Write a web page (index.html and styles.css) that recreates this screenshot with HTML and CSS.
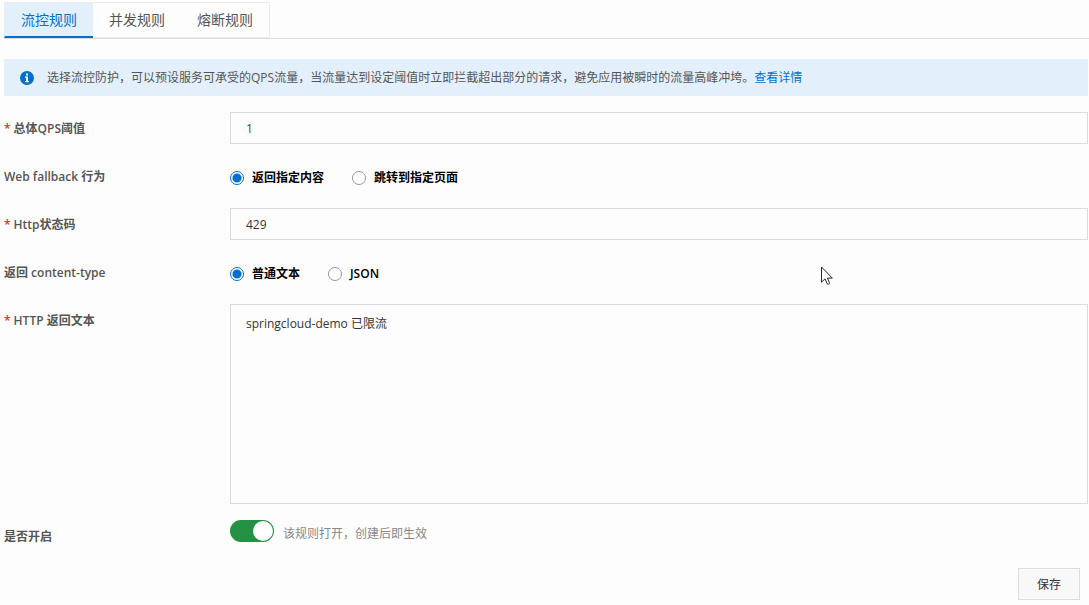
FILE: index.html
```html
<!DOCTYPE html>
<html lang="zh-CN">
<head>
<meta charset="utf-8">
<title>流控规则</title>
<link rel="stylesheet" href="styles.css">
</head>
<body>
<nav class="tabs" role="tablist">
  <button class="tab tab-active" type="button" role="tab" aria-selected="true">流控规则</button>
  <button class="tab" type="button" role="tab" aria-selected="false">并发规则</button>
  <button class="tab" type="button" role="tab" aria-selected="false">熔断规则</button>
</nav>
<main class="panel">
  <div class="notice">
    <svg class="notice-icon" viewBox="0 0 14 14" aria-hidden="true">
      <circle cx="7" cy="7" r="7" fill="#0070cc"/>
      <path d="M6 2.5h2v2H6zM5 5.5h3v4.5h1v1.2H5V10h1V6.7H5z" fill="#fff"/>
    </svg>
    <p class="notice-text">选择流控防护，可以预设服务可承受的QPS流量，当流量达到设定阈值时立即拦截超出部分的请求，避免应用被瞬时的流量高峰冲垮。<a class="link" href="#">查看详情</a></p>
  </div>
  <form class="form">
    <div class="row">
      <label class="label required" for="qps">总体QPS阈值</label>
      <input class="field field-number" id="qps" type="text" value="1">
    </div>
    <div class="row">
      <span class="label" id="fallback-label">Web fallback 行为</span>
      <div class="options" role="radiogroup" aria-labelledby="fallback-label">
        <label class="option"><input class="radio" type="radio" name="fallback" checked>返回指定内容</label>
        <label class="option"><input class="radio" type="radio" name="fallback">跳转到指定页面</label>
      </div>
    </div>
    <div class="row">
      <label class="label required" for="status">Http状态码</label>
      <input class="field" id="status" type="text" value="429">
    </div>
    <div class="row">
      <span class="label" id="type-label">返回 content-type</span>
      <div class="options" role="radiogroup" aria-labelledby="type-label">
        <label class="option"><input class="radio" type="radio" name="type" checked>普通文本</label>
        <label class="option"><input class="radio" type="radio" name="type">JSON</label>
      </div>
    </div>
    <div class="row">
      <label class="label required" for="body">HTTP 返回文本</label>
      <textarea class="field field-area" id="body" spellcheck="false">springcloud-demo 已限流</textarea>
    </div>
    <div class="row">
      <label class="label" for="enabled">是否开启</label>
      <div class="toggle">
        <input class="switch" id="enabled" type="checkbox" role="switch" checked>
        <span class="hint">该规则打开，创建后即生效</span>
      </div>
    </div>
    <div class="actions">
      <button class="save" type="button">保存</button>
    </div>
  </form>
</main>
<svg class="cursor" viewBox="0 0 14 20" aria-hidden="true">
  <path d="M1.5 1v15.2l3.5-3.4 2.2 5.1c.5.9 2.7.1 2.3-1l-2.1-4.8h4.9z" fill="#fff" stroke="#26262e"/>
</svg>
</body>
</html>
```
FILE: styles.css
```css
* {
  box-sizing: border-box;
}

body {
  margin: 0;
  padding-top: 2px;
  background: #fdfdfd;
  color: #555;
  font-family: "Open Sans", "Noto Sans CJK SC", sans-serif;
  font-size: 12px;
  line-height: 18px;
}

button,
input,
textarea {
  margin: 0;
  font: inherit;
}

.tabs {
  display: flex;
  height: 37px;
  margin-left: 4px;
  border-bottom: 1px solid #dcdcdc;
}

.tab {
  width: 88px;
  padding: 0;
  border: solid #ebebeb;
  border-width: 1px 0;
  background: #fdfdfd;
  color: #555;
  font-size: 14px;
  line-height: 20px;
}

.tab:last-child {
  width: 89px;
  border-right-width: 1px;
}

.tab-active {
  width: 89px;
  border-left: 1px solid #ebebeb;
  border-bottom: 2px solid #0070cc;
  background: #e3f0fc;
  color: #0070cc;
}

.panel {
  padding: 20px 1px 0 4px;
}

.notice {
  display: flex;
  align-items: center;
  gap: 13px;
  min-height: 37px;
  padding: 0 16px;
  background: #e3f0fc;
}

.notice-icon {
  flex: none;
  width: 14px;
  height: 14px;
}

.notice-text {
  margin: 0;
}

.link {
  color: #0070cc;
  text-decoration: none;
}

.form {
  display: grid;
  gap: 16px;
  padding-top: 16px;
}

.row {
  display: grid;
  grid-template-columns: 226px 1fr;
  height: auto;
  min-height: 32px;
}

.label {
  height: 32px;
  color: #555;
  font-weight: 600;
  line-height: 34px;
}

.required::before {
  content: "*";
  margin-right: 3px;
  color: #d93026;
}

.field {
  width: 100%;
  height: 32px;
  padding: 0 15px;
  border: 1px solid #dcdcdc;
  border-radius: 0;
  outline: none;
  background: transparent;
  color: #333;
}

.field-number {
  color: #446;
}

.field-area {
  display: block;
  height: 200px;
  padding: 10px 15px;
  resize: none;
}

.options {
  display: flex;
  align-items: center;
  gap: 28px;
  padding-top: 4px;
}

.option {
  display: flex;
  align-items: center;
  gap: 8px;
  color: #000;
  font-weight: 600;
  line-height: 20px;
}

.radio {
  width: 14px;
  height: 14px;
  border: 1px solid #999;
  border-radius: 50%;
  appearance: none;
  background: #fff;
}

.radio:checked {
  border-color: #0070cc;
  background: radial-gradient(circle, #0070cc 4px, #fff 5px);
}

.toggle {
  display: flex;
  align-items: flex-start;
  gap: 9px;
}

.switch {
  display: flex;
  justify-content: flex-end;
  width: 44px;
  height: 22px;
  padding: 1px;
  border-radius: 11px;
  appearance: none;
  background: #259144;
}

.switch::before {
  content: "";
  width: 20px;
  height: 20px;
  border-radius: 50%;
  background: #fff;
}

.hint {
  color: #888;
  line-height: 28px;
}

.actions {
  display: flex;
  justify-content: flex-end;
  padding-right: 8px;
}

.save {
  width: 62px;
  height: 32px;
  padding: 1px 0 0;
  border: 1px solid #dcdcdc;
  background: #f8f8f8;
  color: #333;
}

.cursor {
  position: absolute;
  top: 266px;
  left: 820px;
  width: 14px;
  height: 20px;
}
```
